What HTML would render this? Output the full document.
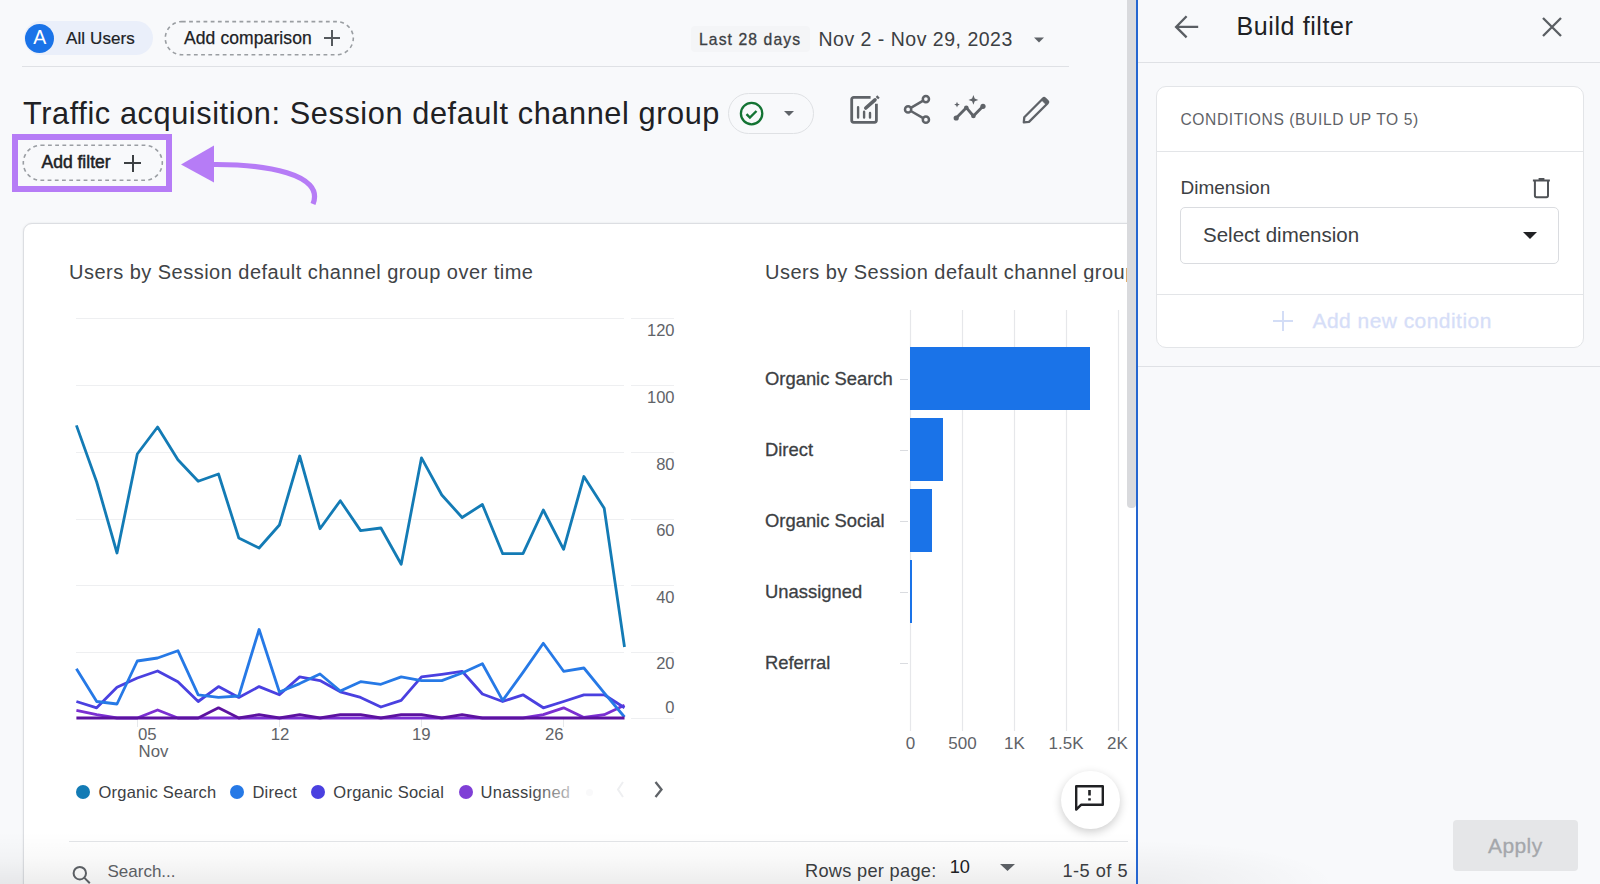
<!DOCTYPE html>
<html><head><meta charset="utf-8">
<style>
*{margin:0;padding:0;box-sizing:border-box}
html,body{width:1600px;height:884px;overflow:hidden;background:#f8f9fb;font-family:"Liberation Sans",sans-serif;position:relative}
.a{position:absolute}
.t{position:absolute;line-height:1;white-space:nowrap}
</style></head>
<body>
<!-- LEFT HEADER -->
<div class="a" style="left:24px;top:21px;width:129px;height:34px;border-radius:17px;background:#eaeffa"></div>
<div class="a" style="left:25px;top:24px;width:29px;height:29px;border-radius:50%;background:#1a73e8"></div>
<div class="t" style="left:25px;width:29.5px;text-align:center;top:27.6px;font-size:19.5px;color:#fff">A</div>
<div class="t" style="left:66px;top:29.6px;font-size:17px;color:#202124;letter-spacing:0.1px;-webkit-text-stroke:0.2px #202124">All Users</div>

<svg class="a" style="left:164px;top:20px" width="191" height="37"><rect x="1.3" y="1.6" width="188" height="33.2" rx="16.6" fill="none" stroke="#9a9ea2" stroke-width="1.6" stroke-dasharray="3.8 3.4"/></svg>
<div class="t" style="left:184px;top:29.7px;font-size:17.5px;color:#202124;letter-spacing:0.1px;-webkit-text-stroke:0.25px #202124">Add comparison</div>
<div class="a" style="left:324px;top:37px;width:16px;height:2px;background:#55595d"></div>
<div class="a" style="left:331px;top:30px;width:2px;height:16px;background:#55595d"></div>

<div class="a" style="left:691px;top:26px;width:119px;height:26px;background:#f4f5f7;border-radius:4px"></div>
<div class="t" style="left:699px;top:31.7px;font-size:15.7px;color:#3c4043;letter-spacing:1.1px;-webkit-text-stroke:0.3px #3c4043">Last 28 days</div>
<div class="t" style="left:818.5px;top:29.5px;font-size:19.5px;color:#3c4043;letter-spacing:0.5px">Nov 2 - Nov 29, 2023</div>
<svg class="a" style="left:1032px;top:36px" width="14" height="8"><path d="M2 1.5h10L7 6.5z" fill="#5f6368"/></svg>

<div class="a" style="left:22px;top:66px;width:1047px;height:1px;background:#dfe1e5"></div>

<!-- TITLE -->
<div class="t" style="left:23px;top:98.6px;font-size:30.7px;color:#202124;letter-spacing:0.6px">Traffic acquisition: Session default channel group</div>
<div class="a" style="left:727.5px;top:93px;width:86px;height:41px;border-radius:20.5px;border:1.3px solid #dfe1e4"></div>
<svg class="a" style="left:737px;top:100px" width="28" height="28"><circle cx="14.6" cy="13.6" r="10.7" fill="none" stroke="#137333" stroke-width="2.3"/><path d="M9.5 14.2l3.4 3.4 6.6-6.6" fill="none" stroke="#137333" stroke-width="2.4"/></svg>
<svg class="a" style="left:782px;top:109px" width="14" height="10"><path d="M2 2h10L7 7z" fill="#5f6368"/></svg>

<!-- ICONS -->
<svg class="a" style="left:846px;top:92px" width="40" height="36" fill="none" stroke="#5f6368" stroke-width="2.8">
<path d="M24.6 5.3H7.7a2 2 0 0 0-2 2v21.05a2 2 0 0 0 2 2h20.7a2 2 0 0 0 2-2V11.75"/>
<path d="M12.1 15.2v10.3M18.1 19.8v5.7M24 21v4.5" stroke-width="2.4" stroke-linecap="round"/>
<path d="M19.8 16l9.2-8.2" stroke-width="3.6" stroke-linecap="round"/>
<path d="M30.9 6.1l1.6-1.6" stroke-width="3.4"/>
</svg>
<svg class="a" style="left:900px;top:92px" width="34" height="34" fill="none" stroke="#5f6368" stroke-width="2.5">
<circle cx="25.9" cy="7.1" r="3.1"/><circle cx="8.1" cy="17.4" r="3.1"/><circle cx="25.9" cy="27.7" r="3.1"/>
<path d="M10.8 15.8l12.4-7.1M10.8 19l12.4 7.1"/>
</svg>
<svg class="a" style="left:950px;top:92px" width="40" height="32" fill="#5f6368">
<path d="M6.2 26l10.1-10.3 7.1 8.3 9.6-9.7" fill="none" stroke="#5f6368" stroke-width="2.8" stroke-linejoin="round"/>
<circle cx="6.2" cy="26" r="2.6"/><circle cx="16.3" cy="15.7" r="2.3"/><circle cx="23.4" cy="24" r="2.3"/><circle cx="33" cy="14.3" r="2.6"/>
<path d="M23.4 3l1.3 3.6 3.6 1.3-3.6 1.3-1.3 3.6-1.3-3.6-3.6-1.3 3.6-1.3z"/>
<path d="M7 9.8l.8 2 2 .8-2 .8-.8 2-.8-2-2-.8 2-.8z"/>
</svg>
<svg class="a" style="left:1016.8px;top:92.8px" width="36" height="34" fill="none" stroke="#5f6368" stroke-linejoin="round">
<path d="M6.8 29.4l.5-5.2L26 5.5a1.5 1.5 0 0 1 2.1 0l2.6 2.6a1.5 1.5 0 0 1 0 2.1L12 28.9z" stroke-width="2.3"/>
<path d="M24.6 7l2.4-2.4 4.3 4.3-2.4 2.4z" fill="#5f6368" stroke-width="1"/>
</svg>

<!-- ADD FILTER + HIGHLIGHT -->
<div class="a" style="left:12px;top:134px;width:160px;height:58px;border:6px solid #b67cf6"></div>
<svg class="a" style="left:22px;top:144px" width="142" height="38"><rect x="1.3" y="1.3" width="139" height="35" rx="17.5" fill="none" stroke="#9a9ea3" stroke-width="1.6" stroke-dasharray="3.8 3.4"/></svg>
<div class="t" style="left:41.5px;top:154.3px;font-size:17.5px;color:#202124;letter-spacing:0px;-webkit-text-stroke:0.5px #202124">Add filter</div>
<div class="a" style="left:124px;top:162px;width:17px;height:2px;background:#3c4043"></div>
<div class="a" style="left:131.5px;top:154.5px;width:2px;height:17px;background:#3c4043"></div>
<svg class="a" style="left:0;top:0" width="340" height="220">
<path d="M181 164.5L214 145.5v37z" fill="#b67cf6"/>
<path d="M212 164.5C265 164 325 174 313 204" fill="none" stroke="#b67cf6" stroke-width="5.2"/>
</svg>

<!-- CARD -->
<div class="a" style="left:23px;top:223px;width:1130px;height:700px;background:#fff;border:1px solid #dcdee2;border-radius:9px;box-shadow:0 0 2px rgba(60,64,67,0.12)"></div>

<div class="t" style="left:69px;top:262.2px;font-size:20px;color:#404346;letter-spacing:0.48px">Users by Session default channel group over time</div>
<div class="t" style="left:765px;top:262.2px;font-size:20px;color:#404346;letter-spacing:0.48px;width:362px;overflow:hidden">Users by Session default channel group</div>

<!-- LINE CHART -->
<svg class="a" style="left:0;top:0" width="1140" height="884">
<g stroke="#eeeff1" stroke-width="1">
<path d="M76 318.5h548M631 318.5h43M76 385.5h548M631 385.5h43M76 452.5h548M631 452.5h43M76 519.5h548M631 519.5h43M76 585.5h548M631 585.5h43M76 652.5h548M631 652.5h43M631 718.5h43"/>
</g>
<g stroke="#e6e8eb"><path d="M137.5 719v8M279.5 719v8M421.5 719v8M563.5 719v8"/></g>
<g fill="none" stroke-width="2.8" stroke-linejoin="round">
<path d="M76.4 710.4 L96.7 714.7 L117.0 718.0 L137.3 718.0 L157.6 710.0 L177.9 718.0 L198.2 718.0 L218.5 718.0 L238.8 718.0 L259.1 718.0 L279.4 718.0 L299.7 718.0 L320.0 718.0 L340.3 718.0 L360.6 718.0 L380.9 718.0 L401.2 718.0 L421.5 718.0 L441.8 718.0 L462.1 718.0 L482.4 718.0 L502.7 718.0 L523.0 718.0 L543.3 714.7 L563.6 707.8 L583.9 717.5 L604.2 714.7 L624.5 705.3" stroke="#7b2fd2"/>
<path d="M76.4 701.5 L96.7 707.8 L117.0 687.3 L137.3 678.0 L157.6 671.0 L177.9 681.7 L198.2 701.5 L218.5 686.6 L238.8 697.4 L259.1 686.6 L279.4 694.8 L299.7 676.9 L320.0 680.6 L340.3 691.8 L360.6 697.4 L380.9 707.0 L401.2 700.4 L421.5 676.9 L441.8 674.3 L462.1 671.3 L482.4 694.0 L502.7 701.5 L523.0 694.8 L543.3 707.8 L563.6 701.5 L583.9 694.8 L604.2 694.8 L624.5 707.8" stroke="#4a40e0"/>
<path d="M76.4 668.7 L96.7 701.5 L117.0 704.0 L137.3 661.0 L157.6 658.0 L177.9 650.7 L198.2 694.8 L218.5 697.4 L238.8 696.0 L259.1 629.5 L279.4 692.0 L299.7 683.6 L320.0 674.0 L340.3 691.0 L360.6 681.7 L380.9 684.3 L401.2 676.9 L421.5 680.6 L441.8 680.6 L462.1 673.0 L482.4 663.8 L502.7 700.4 L523.0 672.4 L543.3 643.3 L563.6 671.3 L583.9 668.0 L604.2 692.9 L624.5 717.0" stroke="#2679e6"/>
<path d="M76.4 425.4 L96.7 482.0 L117.0 553.0 L137.3 454.0 L157.6 427.0 L177.9 459.7 L198.2 481.3 L218.5 474.0 L238.8 538.0 L259.1 548.0 L279.4 525.0 L299.7 456.0 L320.0 528.7 L340.3 500.7 L360.6 530.6 L380.9 528.0 L401.2 564.2 L421.5 457.8 L441.8 495.0 L462.1 517.5 L482.4 504.5 L502.7 553.7 L523.0 553.7 L543.3 510.0 L563.6 549.3 L583.9 476.5 L604.2 508.2 L624.5 647.0" stroke="#137bb5"/>
<path d="M76.4 718.0 L96.7 718.0 L117.0 718.0 L137.3 718.0 L157.6 718.0 L177.9 718.0 L198.2 718.0 L218.5 707.8 L238.8 718.0 L259.1 714.7 L279.4 718.0 L299.7 714.7 L320.0 718.0 L340.3 714.7 L360.6 714.7 L380.9 718.0 L401.2 714.7 L421.5 714.7 L441.8 718.0 L462.1 714.7 L482.4 718.0 L502.7 718.0 L523.0 718.0 L543.3 718.0 L563.6 718.0 L583.9 718.0 L604.2 718.0 L624.5 718.0" stroke="#5c12a0"/>
</g>
</svg>
<div class="t" style="right:925.5px;top:322.2px;font-size:16.5px;color:#5f6368">120</div>
<div class="t" style="right:925.5px;top:388.9px;font-size:16.5px;color:#5f6368">100</div>
<div class="t" style="right:925.5px;top:455.6px;font-size:16.5px;color:#5f6368">80</div>
<div class="t" style="right:925.5px;top:522.2px;font-size:16.5px;color:#5f6368">60</div>
<div class="t" style="right:925.5px;top:588.9px;font-size:16.5px;color:#5f6368">40</div>
<div class="t" style="right:925.5px;top:655.4px;font-size:16.5px;color:#5f6368">20</div>
<div class="t" style="right:925.5px;top:698.7px;font-size:16.5px;color:#5f6368">0</div>
<div class="t" style="left:138px;top:726.9px;font-size:16.8px;color:#5f6368;">05</div>
<div class="t" style="left:270.7px;top:726.9px;font-size:16.8px;color:#5f6368;">12</div>
<div class="t" style="left:412px;top:726.9px;font-size:16.8px;color:#5f6368;">19</div>
<div class="t" style="left:545px;top:726.9px;font-size:16.8px;color:#5f6368;">26</div>
<div class="t" style="left:138.6px;top:744.1px;font-size:16.8px;color:#5f6368;">Nov</div>
<div class="a" style="left:75.8px;top:784.8px;width:14.4px;height:14.4px;border-radius:50%;background:#137bb5"></div>
<div class="t" style="left:98.4px;top:783.5px;font-size:16.5px;color:#3c4043;letter-spacing:0.25px">Organic Search</div>
<div class="a" style="left:229.6px;top:784.8px;width:14.4px;height:14.4px;border-radius:50%;background:#2679e6"></div>
<div class="t" style="left:252.4px;top:783.5px;font-size:16.5px;color:#3c4043;letter-spacing:0.25px">Direct</div>
<div class="a" style="left:311.1px;top:784.8px;width:14.4px;height:14.4px;border-radius:50%;background:#4a40e0"></div>
<div class="t" style="left:333.3px;top:783.5px;font-size:16.5px;color:#3c4043;letter-spacing:0.25px">Organic Social</div>
<div class="a" style="left:458.7px;top:784.8px;width:14.4px;height:14.4px;border-radius:50%;background:#7f3fd6"></div>
<div class="t" style="left:480.6px;top:783.5px;font-size:16.5px;color:#3c4043;letter-spacing:0.25px">Unassigned</div>
<div class="a" style="left:530px;top:780px;width:80px;height:26px;background:linear-gradient(90deg,rgba(255,255,255,0),rgba(255,255,255,0.75) 55%,#fff 80%)"></div>
<div class="a" style="left:586px;top:789px;width:7px;height:7px;border-radius:50%;background:#f9f9fa"></div>
<svg class="a" style="left:612px;top:778px" width="56" height="24" fill="none" stroke-width="2"><path d="M623 782l-5 7.5 5 7.5" transform="translate(-612 -778)" stroke="#eeeff1"/><path d="M655.5 782l6 7.5-6 7.5" transform="translate(-612 -778)" stroke="#5f6368" stroke-width="2.3"/></svg>
<div class="t" style="left:765px;top:370.1px;font-size:18.4px;color:#3c4043;-webkit-text-stroke:0.3px #3c4043;">Organic Search</div>
<div class="t" style="left:765px;top:440.9px;font-size:18.4px;color:#3c4043;-webkit-text-stroke:0.3px #3c4043;">Direct</div>
<div class="t" style="left:765px;top:511.8px;font-size:18.4px;color:#3c4043;-webkit-text-stroke:0.3px #3c4043;">Organic Social</div>
<div class="t" style="left:765px;top:582.8px;font-size:18.4px;color:#3c4043;-webkit-text-stroke:0.3px #3c4043;">Unassigned</div>
<div class="t" style="left:765px;top:653.8px;font-size:18.4px;color:#3c4043;-webkit-text-stroke:0.3px #3c4043;">Referral</div>
<div class="t" style="left:860.5px;width:100px;text-align:center;top:734.6px;font-size:17px;color:#5f6368">0</div>
<div class="t" style="left:912.5px;width:100px;text-align:center;top:734.6px;font-size:17px;color:#5f6368">500</div>
<div class="t" style="left:964.5px;width:100px;text-align:center;top:734.6px;font-size:17px;color:#5f6368">1K</div>
<div class="t" style="left:1016px;width:100px;text-align:center;top:734.6px;font-size:17px;color:#5f6368">1.5K</div>
<div class="t" style="left:1067.5px;width:100px;text-align:center;top:734.6px;font-size:17px;color:#5f6368">2K</div>
<div class="a" style="left:69px;top:841px;width:1059px;height:1px;background:#e3e5e8"></div>
<svg class="a" style="left:68px;top:861px" width="26" height="26" fill="none" stroke="#5f6368" stroke-width="2"><circle cx="11.8" cy="12.2" r="6.2"/><path d="M16.2 16.6l5.6 5.6"/></svg>
<div class="t" style="left:107.5px;top:863.1px;font-size:17px;color:#5f6368;">Search...</div>
<div class="t" style="left:805px;top:861.6px;font-size:18.2px;color:#3c4043;letter-spacing:0.3px">Rows per page:</div>
<div class="t" style="left:949.7px;top:858.3px;font-size:18.2px;color:#202124;">10</div>
<svg class="a" style="left:998px;top:862px" width="20" height="12"><path d="M2 2h15L9.5 9z" fill="#5f6368"/></svg>
<div class="t" style="left:1062.4px;top:861.6px;font-size:18.2px;color:#3c4043;letter-spacing:0.5px">1-5 of 5</div>
<div class="a" style="left:1061px;top:770.5px;width:58.5px;height:58.5px;border-radius:50%;background:#fff;box-shadow:0 3px 10px rgba(0,0,0,0.2)"></div>
<svg class="a" style="left:1070px;top:780px" width="40" height="36" fill="none" stroke="#202124" stroke-width="2.6"><path d="M6.2 6.2h26.6v18.6H11l-4.8 4.8z" stroke-linejoin="round" stroke-width="2.4"/><path d="M19.5 10v5.5M19.5 18.2v2.4" stroke-width="2.6"/></svg>
<div class="a" style="left:0;top:832px;width:1136px;height:52px;background:linear-gradient(180deg,rgba(0,0,0,0),rgba(0,0,0,0.025) 50%,rgba(0,0,0,0.07))"></div>

<!-- BAR CHART -->
<svg class="a" style="left:0;top:0" width="1140" height="884">
<g stroke="#e6e7ea" stroke-width="1.2"><path d="M910.5 310v421M962.5 310v421M1014.5 310v421M1066.5 310v421M1118.5 310v421"/></g>
<g stroke="#dadce0"><path d="M900 379.5h8M900 450.5h8M900 521.5h8M900 592.5h8M900 663.5h8"/></g>
<g fill="#1a73e8">
<rect x="910" y="347" width="180" height="63"/>
<rect x="910" y="418" width="33" height="63"/>
<rect x="910" y="489" width="22" height="63"/>
<rect x="910" y="560" width="2" height="63"/>
</g>
</svg>

<!-- SCROLLBAR / DIVIDER -->
<div class="a" style="left:1127px;top:0;width:9px;height:508px;background:#d9dadd;border-radius:0 0 4px 4px"></div>
<div class="a" style="left:1136px;top:0;width:1.5px;height:884px;background:#2566d0"></div>

<!-- RIGHT PANEL -->
<div class="a" style="left:1138px;top:0;width:462px;height:884px;background:#f8f9fb"></div>
<svg class="a" style="left:1170px;top:12px" width="32" height="32" fill="none" stroke="#5a5e63" stroke-width="2.3"><path d="M28.2 14.9H7M16.6 4.3L6.1 14.9l10.5 10.5"/></svg>
<div class="t" style="left:1236.5px;top:14px;font-size:25px;color:#202124;letter-spacing:0.6px">Build filter</div>
<svg class="a" style="left:1538px;top:13px" width="28" height="28" fill="none" stroke="#5a5e63" stroke-width="2.3"><path d="M5 5l18 18M23 5L5 23"/></svg>
<div class="a" style="left:1138px;top:62px;width:462px;height:1px;background:#dfe1e5"></div>

<div class="a" style="left:1156px;top:86px;width:428px;height:262px;background:#fff;border:1px solid #e3e5e8;border-radius:10px"></div>
<div class="t" style="left:1180.5px;top:111.9px;font-size:15.6px;color:#5f6368;letter-spacing:0.6px">CONDITIONS (BUILD UP TO 5)</div>
<div class="a" style="left:1157px;top:151px;width:426px;height:1px;background:#e3e5e8"></div>
<div class="t" style="left:1180.5px;top:177.6px;font-size:19px;color:#3c4043">Dimension</div>
<svg class="a" style="left:1528px;top:175px" width="26" height="26" fill="none" stroke="#505357" stroke-width="2"><path d="M6.9 6v14.6a1.6 1.6 0 0 0 1.6 1.6h9.9a1.6 1.6 0 0 0 1.6-1.6V6M4.9 5.6h17M10.6 4.1h5.8"/></svg>
<div class="a" style="left:1180px;top:207px;width:379px;height:57px;border:1px solid #dadce0;border-radius:5px;background:#fff"></div>
<div class="t" style="left:1203px;top:225px;font-size:20.5px;color:#3c4043">Select dimension</div>
<svg class="a" style="left:1520px;top:229px" width="20" height="14"><path d="M3 3h14L10 10z" fill="#202124"/></svg>
<div class="a" style="left:1157px;top:294px;width:426px;height:1px;background:#e3e5e8"></div>
<div class="a" style="left:1273px;top:320px;width:20px;height:1.6px;background:#d3ddf6"></div>
<div class="a" style="left:1282.2px;top:311px;width:1.6px;height:20px;background:#d3ddf6"></div>
<div class="t" style="left:1312.5px;top:310px;font-size:21px;color:#d6def8;letter-spacing:0.45px;-webkit-text-stroke:0.3px #d6def8">Add new condition</div>
<div class="a" style="left:1138px;top:366px;width:462px;height:1px;background:#dfe1e5"></div>

<div class="a" style="left:1138px;top:840px;width:200px;height:44px;background:radial-gradient(ellipse at 0% 100%,rgba(0,0,0,0.05),rgba(0,0,0,0) 70%)"></div>
<div class="a" style="left:1453px;top:820px;width:125px;height:51px;background:#e5e6e8;border-radius:4px"></div>
<div class="t" style="left:1488px;top:835px;font-size:21px;color:#a4a7ab;letter-spacing:0.4px;-webkit-text-stroke:0.3px #a4a7ab">Apply</div>

</body></html>
